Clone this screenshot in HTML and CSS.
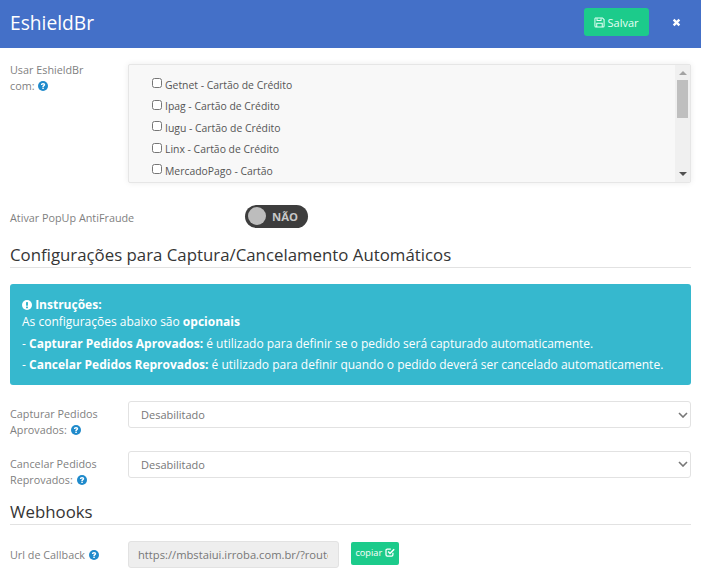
FILE: index.html
```html
<!DOCTYPE html>
<html lang="pt-BR">
<head>
<meta charset="utf-8">
<title>EshieldBr</title>
<link rel="stylesheet" href="styles.css">
</head>
<body>
<header class="top">
  <h1 class="title">EshieldBr</h1>
  <div class="actions">
    <button class="save" type="button">
      <svg class="ico-save" viewBox="0 0 12 12" width="11" height="11"><path d="M1.500 1h7.700L11 2.800v7a1.200 1.200 0 0 1-1.200 1.200H2.200A1.200 1.200 0 0 1 1 9.800V2.200A1.200 1.200 0 0 1 1.500 1z" fill="none" stroke="currentColor" stroke-width="1.100"/><path d="M3.300 1.300v2.600h4.400V1.300M3 10.800V6.800h6v4" fill="none" stroke="currentColor" stroke-width="1.100"/></svg>
      Salvar
    </button>
    <button class="close" type="button" aria-label="Fechar">
      <svg viewBox="0 0 10 10" width="9" height="9"><path d="M1.800 1.800l6.400 6.400M8.200 1.800L1.800 8.200" stroke="#fff" stroke-width="2.600" fill="none"/></svg>
    </button>
  </div>
</header>
<main class="content">
  <div class="row row-list">
    <div class="label">Usar EshieldBr com: <svg class="help" viewBox="0 0 10 10"><circle cx="5" cy="5" r="5"/><path d="M2.900 3.900C2.900 2.700 3.800 2 5 2c1.300 0 2.200.7 2.200 1.800 0 1.400-1.400 1.300-1.400 2.300H4.300c0-1.700 1.300-1.600 1.300-2.300 0-.3-.3-.5-.6-.5-.4 0-.6.300-.6.700z" class="q"/><rect class="q" x="4.300" y="6.600" width="1.500" height="1.400"/></svg></div>
    <div class="list">
      <div class="opts">
        <label class="opt"><input type="checkbox"> Getnet - Cartão de Crédito</label>
        <label class="opt"><input type="checkbox"> Ipag - Cartão de Crédito</label>
        <label class="opt"><input type="checkbox"> Iugu - Cartão de Crédito</label>
        <label class="opt"><input type="checkbox"> Linx - Cartão de Crédito</label>
        <label class="opt"><input type="checkbox"> MercadoPago - Cartão</label>
      </div>
      <div class="scrollbar">
        <svg viewBox="0 0 8 4" width="8" height="4"><path d="M0 4l4-4 4 4z" fill="#a3a3a3"/></svg>
        <span class="thumb"></span>
        <svg class="down" viewBox="0 0 8 4" width="8" height="4"><path d="M0 0l4 4 4-4z" fill="#505050"/></svg>
      </div>
    </div>
  </div>
  <div class="row-toggle">
    <div class="label">Ativar PopUp AntiFraude</div>
    <div class="toggle"><span class="knob"></span><span class="toggle-text">NÃO</span></div>
  </div>
  <h2 class="section">Configurações para Captura/Cancelamento Automáticos</h2>
  <div class="alert">
    <div><svg class="bang" viewBox="0 0 10 10"><circle cx="5" cy="5" r="5"/><rect class="b" x="4" y="2" width="2" height="3.800" rx=".5"/><rect class="b" x="4" y="6.600" width="2" height="1.600" rx=".5"/></svg> <b>Instruções:</b></div>
    <div>As configurações abaixo são <b>opcionais</b></div>
    <div class="gap">- <b>Capturar Pedidos Aprovados:</b> é utilizado para definir se o pedido será capturado automaticamente.</div>
    <div class="gap">- <b>Cancelar Pedidos Reprovados:</b> é utilizado para definir quando o pedido deverá ser cancelado automaticamente.</div>
  </div>
  <div class="row row-select">
    <div class="label">Capturar Pedidos Aprovados: <svg class="help" viewBox="0 0 10 10"><circle cx="5" cy="5" r="5"/><path d="M2.900 3.900C2.900 2.700 3.800 2 5 2c1.300 0 2.200.7 2.200 1.800 0 1.400-1.400 1.300-1.400 2.300H4.300c0-1.700 1.300-1.600 1.300-2.300 0-.3-.3-.5-.6-.5-.4 0-.6.300-.6.700z" class="q"/><rect class="q" x="4.300" y="6.600" width="1.500" height="1.400"/></svg></div>
    <div class="select">Desabilitado<svg class="chev" viewBox="0 0 10 6" width="10" height="6"><path d="M1 1l4 4 4-4" fill="none" stroke="#777" stroke-width="1.600"/></svg></div>
  </div>
  <div class="row row-select">
    <div class="label">Cancelar Pedidos Reprovados: <svg class="help" viewBox="0 0 10 10"><circle cx="5" cy="5" r="5"/><path d="M2.900 3.900C2.900 2.700 3.800 2 5 2c1.300 0 2.200.7 2.200 1.800 0 1.400-1.400 1.300-1.400 2.300H4.300c0-1.700 1.300-1.600 1.300-2.300 0-.3-.3-.5-.6-.5-.4 0-.6.300-.6.700z" class="q"/><rect class="q" x="4.300" y="6.600" width="1.500" height="1.400"/></svg></div>
    <div class="select">Desabilitado<svg class="chev" viewBox="0 0 10 6" width="10" height="6"><path d="M1 1l4 4 4-4" fill="none" stroke="#777" stroke-width="1.600"/></svg></div>
  </div>
  <h2 class="section section-web">Webhooks</h2>
  <div class="row row-url">
    <div class="label">Url de Callback <svg class="help" viewBox="0 0 10 10"><circle cx="5" cy="5" r="5"/><path d="M2.900 3.900C2.900 2.700 3.800 2 5 2c1.300 0 2.200.7 2.200 1.800 0 1.400-1.400 1.300-1.400 2.300H4.300c0-1.700 1.300-1.600 1.300-2.300 0-.3-.3-.5-.6-.5-.4 0-.6.300-.6.700z" class="q"/><rect class="q" x="4.300" y="6.600" width="1.500" height="1.400"/></svg></div>
    <div class="url-wrap">
      <div class="url"><span class="url-text">https://mbstaiui.irroba.com.br/?route</span></div>
      <button class="copy" type="button">copiar <svg viewBox="0 0 12 12" width="10" height="10"><path d="M9.500 7v2.300a1.500 1.500 0 0 1-1.500 1.500H2.700a1.500 1.500 0 0 1-1.500-1.500V4a1.500 1.500 0 0 1 1.500-1.500H7" fill="none" stroke="#fff" stroke-width="1.500"/><path d="M3.800 5.500l2.200 2.200L11 2.700" fill="none" stroke="#fff" stroke-width="1.800"/></svg></button>
    </div>
  </div>
</main>
</body>
</html>
```
FILE: styles.css
```css
* { box-sizing: border-box; }
html, body { margin: 0; padding: 0; }
body {
  width: 701px;
  height: 580px;
  overflow: hidden;
  background: #fff;
  font-family: "Open Sans", sans-serif;
  font-size: 10.800px;
  color: #7f7f7f;
}
.top {
  height: 48px;
  background: #4470c8;
  display: flex;
  align-items: center;
  justify-content: space-between;
  padding: 0 10px 4px;
}
.title {
  margin: 0;
  font-size: 19.200px;
  font-weight: 400;
  color: #fff;
}
.actions { display: flex; align-items: center; }
.save {
  width: 65px;
  height: 28px;
  border: 0;
  border-radius: 3px;
  background: #1ccb8b;
  color: #e6fff5;
  font: 400 11px "Open Sans", sans-serif;
  padding: 0;
  display: flex;
  align-items: center;
  justify-content: center;
  gap: 2px;
}
.close {
  width: 16px;
  height: 28px;
  margin-left: 19px;
  margin-right: 7px;
  background: none;
  border: 0;
  padding: 0;
  display: flex;
  align-items: center;
  justify-content: center;
}
.content { padding: 16px 10px 0; }
.label { line-height: 16px; }
.row { display: grid; grid-template-columns: 118px 563px; }
.row-list .label { margin-top: -2px; padding-right: 30px; }
.help { width: 10px; height: 10px; vertical-align: -1px; fill: #1f8acb; margin-left: 1px; }
.help .q { fill: #fff; }
.list {
  height: 119px;
  display: flex;
  background: #f8f8f8;
  border: 1px solid #e6e6e6;
  border-radius: 2px;
  box-shadow: 0 0 6px rgba(0, 0, 0, .08);
  overflow: hidden;
}
.opts {
  flex: 1;
  padding: 9px 0 0 23px;
  color: #555;
  font-size: 10.400px;
}
.opt { display: flex; align-items: center; height: 21.500px; gap: 3px; }
.opt input { margin: 0 0 3px; width: 10px; height: 10px; }
.scrollbar {
  width: 15px;
  background: #f0f0f0;
  display: flex;
  flex-direction: column;
  align-items: center;
  padding-top: 6px;
}
.thumb { width: 11px; height: 38px; background: #bfbfbf; margin-top: 5px; }
.scrollbar .down { margin-top: auto; margin-bottom: 6px; }
.row-toggle {
  margin-top: 21px;
  height: 24px;
  display: flex;
  align-items: center;
}
.row-toggle .label { width: 235px; padding-top: 4px; }
.toggle {
  width: 63px;
  height: 23px;
  border-radius: 12px;
  background: #3d3d3d;
  display: flex;
  align-items: center;
  padding-left: 3px;
  color: #c8c8c8;
  font-weight: 700;
  font-size: 11.300px;
}
.knob { width: 18px; height: 18px; border-radius: 50%; background: #bdbdbd; margin-right: 6px; }
.section {
  margin: 15px 0 0;
  font-size: 16.820px;
  font-weight: 400;
  line-height: 22px;
  padding: 1px 0 1px;
  color: #353535;
  border-bottom: 1px solid #e2e2e2;
}
.alert {
  margin-top: 16px;
  height: 101px;
  background: #36b8ce;
  border-radius: 3px;
  padding: 12px 12px 0;
  color: #fff;
  font-size: 12px;
  line-height: 17px;
}
.alert .gap { margin-top: 4.500px; }
.bang { width: 10px; height: 10px; vertical-align: -1px; fill: #fff; }
.bang .b { fill: #36b8ce; }
.row-select { height: 49.400px; }
.alert + .row-select { margin-top: 16.400px; }
.row-select .label { padding-top: 5px; }
.select {
  height: 27px;
  background: #fff;
  border: 1px solid #e2e2e2;
  border-radius: 3px;
  padding-left: 12px;
  font-size: 11px;
  color: #777;
  display: flex;
  align-items: center;
  justify-content: space-between;
  padding-right: 2px;
}
.section-web { margin-top: 0; }
.row-url { margin-top: 16px; }
.row-url .label { padding-top: 6px; }
.url-wrap { display: flex; align-items: flex-start; }
.url {
  width: 211px;
  height: 27px;
  background: #eee;
  border: 1px solid #e2e2e2;
  border-radius: 3px;
  padding: 0 10px 0 9px;
  display: flex;
  align-items: center;
  font-size: 11.200px;
  color: #777;
}
.url-text { overflow: hidden; white-space: nowrap; }
.copy {
  margin: 1px 0 0 12px;
  width: 48px;
  height: 23px;
  border: 0;
  border-radius: 2px;
  background: #1ccb8b;
  color: #fff;
  font: 400 9.200px "Open Sans", sans-serif;
  padding: 0 0 3px;
}
.copy svg { vertical-align: -1px; }
```
